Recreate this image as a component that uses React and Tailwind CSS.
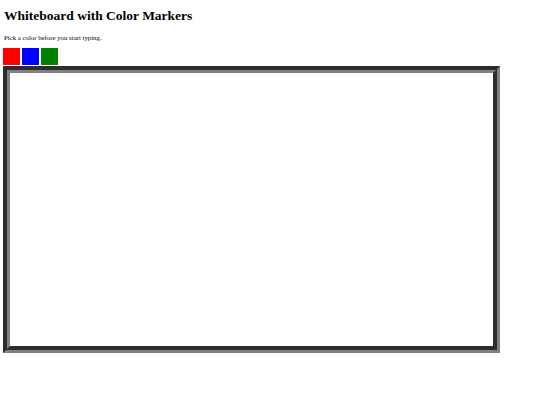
import React, { useState } from "react";

const colors = [
  { name: "red", cls: "bg-[#ff0000]" },
  { name: "blue", cls: "bg-[#0000ff]" },
  { name: "green", cls: "bg-[#008000]" },
];

export default function App() {
  const [color, setColor] = useState("black");
  const [text, setText] = useState("");

  return (
    <div className="w-[540px] h-[405px] bg-white pl-[3px] font-['Liberation_Serif',serif] text-black">
      <h2 className="pt-[8px] pl-[1px] text-[13.5px] leading-[16px] font-bold">
        Whiteboard with Color Markers
      </h2>
      <p className="mt-[10px] pl-[1px] text-[6.8px] leading-[8px]">
        Pick a color before you start typing.
      </p>
      <div className="mt-[6px] flex gap-[2px]">
        {colors.map((c) => (
          <button
            key={c.name}
            onClick={() => setColor(c.name)}
            className={`w-[17px] h-[17px] ${c.cls}`}
            aria-label={c.name}
          />
        ))}
      </div>
      <textarea
        value={text}
        onChange={(e) => setText(e.target.value)}
        style={{ color }}
        className="mt-[1px] block w-[497px] h-[287px] border-[7px] [border-style:groove] border-[#808080] bg-white resize-none outline-none p-1 text-[8px]"
      />
    </div>
  );
}
